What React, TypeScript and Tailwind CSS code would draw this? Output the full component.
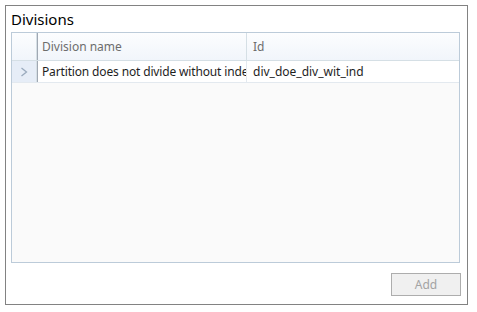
export default function App() {
  return (
    <div className="h-[312px] w-[477px] bg-white pl-[5px] pt-[5px] font-['Noto_Sans',sans-serif]">
      <div className="flex h-[300px] w-[463px] flex-col border border-[#828282] px-[5px]">
        <div className="pt-[3px] text-[15px] leading-[20px] text-black">Divisions</div>
        <div className="mt-[3px] flex h-[231px] w-[449px] flex-col border border-[#bccbd9] bg-[#fafafa]">
          <div className="flex h-[28px] border-b border-[#d5dfe5] bg-gradient-to-b from-[#fcfdfe] to-[#f1f5fb] text-[12px] text-[#6d6d6d]">
            <div className="w-[25px] border-r border-[#d5dfe5]" />
            <div className="w-[1px] bg-[#a0a8b3]" />
            <div className="flex w-[209px] items-center border-r border-[#d5dfe5] pl-[4px]">Division name</div>
            <div className="flex flex-1 items-center pl-[6px]">Id</div>
          </div>
          <div className="flex h-[22px] border-b border-[#e3e9ef] bg-white text-[12px] text-[#1e1e1e]">
            <div className="flex w-[25px] items-center justify-center border-r border-[#d5dfe5] bg-[#e6edf7]">
              <svg width="8" height="10" viewBox="0 0 8 10" fill="none">
                <path d="M1.5 1 L6.5 5 L1.5 9" stroke="#9aaabd" strokeWidth="1.3" />
              </svg>
            </div>
            <div className="w-[1px] bg-[#a0a8b3]" />
            <div className="flex w-[209px] items-center overflow-hidden whitespace-nowrap border-r border-[#e3e9ef] pl-[4px] tracking-[-0.15px]">
              Partition does not divide without inder
            </div>
            <div className="flex flex-1 items-center pl-[6px]">div_doe_div_wit_ind</div>
          </div>
        </div>
        <div className="mt-[10px] flex justify-end pr-[1px]">
          <button className="h-[23px] w-[70px] border border-[#adadad] bg-[#f0f0f0] text-[12px] text-[#a3a3a3]">
            Add
          </button>
        </div>
      </div>
    </div>
  )
}
